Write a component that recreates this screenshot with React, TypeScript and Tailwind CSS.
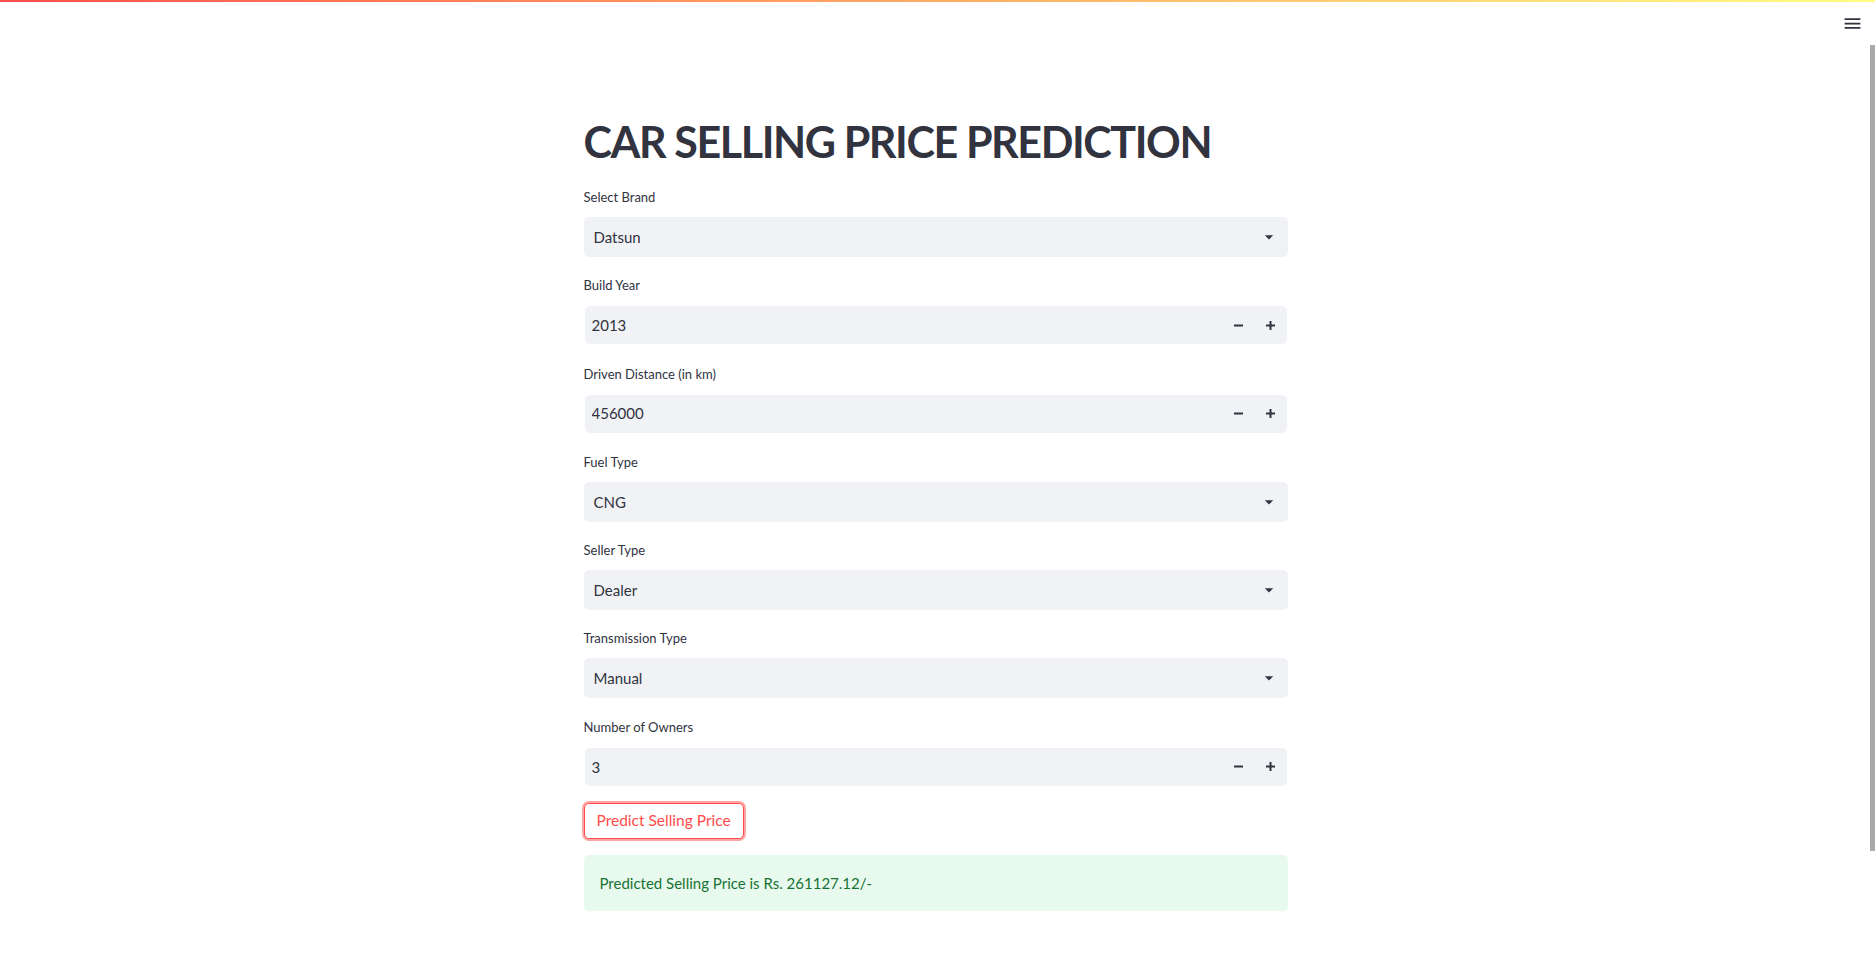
import { useState } from 'react'

type Field =
  | { kind: 'select'; label: string; value: string }
  | { kind: 'number'; label: string; value: string }

const fields: Field[] = [
  { kind: 'select', label: 'Select Brand', value: 'Datsun' },
  { kind: 'number', label: 'Build Year', value: '2013' },
  { kind: 'number', label: 'Driven Distance (in km)', value: '456000' },
  { kind: 'select', label: 'Fuel Type', value: 'CNG' },
  { kind: 'select', label: 'Seller Type', value: 'Dealer' },
  { kind: 'select', label: 'Transmission Type', value: 'Manual' },
  { kind: 'number', label: 'Number of Owners', value: '3' },
]

const MenuIcon = () => (
  <svg width="21" height="21" viewBox="0 0 24 24" fill="#31333f">
    <path d="M3 18h18v-2H3v2zm0-5h18v-2H3v2zm0-7v2h18V6H3z" />
  </svg>
)

const ArrowDown = () => (
  <svg width="20" height="20" viewBox="0 0 24 24" fill="#31333f">
    <path d="M7 10l5 5 5-5z" />
  </svg>
)

const Minus = () => (
  <svg width="9" height="9" viewBox="0 0 9 9" fill="#31333f">
    <rect x="0" y="3.5" width="9" height="2" />
  </svg>
)

const Plus = () => (
  <svg width="9" height="9" viewBox="0 0 9 9" fill="#31333f">
    <rect x="0" y="3.5" width="9" height="2" />
    <rect x="3.5" y="0" width="2" height="9" />
  </svg>
)

const SelectBox = ({ value }: { value: string }) => (
  <div className="h-[40px] rounded-[5px] bg-[#f0f2f6] flex items-center justify-between pl-[10px] pr-[9px] cursor-pointer">
    <span className="text-[15px] text-[#31333f]">{value}</span>
    <ArrowDown />
  </div>
)

const NumberBox = ({ value }: { value: string }) => {
  const [v, setV] = useState(value)
  return (
    <div className="h-[40px] p-[1px]">
      <div className="h-full rounded-[5px] bg-[#f0f2f6] flex items-center">
        <input
          value={v}
          onChange={(e) => setV(e.target.value)}
          className="flex-1 min-w-0 bg-transparent outline-none pl-[7px] text-[15px] text-[#31333f]"
        />
        <button className="w-[32px] h-full flex items-center justify-center">
          <Minus />
        </button>
        <button className="w-[32px] h-full flex items-center justify-center">
          <Plus />
        </button>
      </div>
    </div>
  )
}

export default function App() {
  return (
    <div className="min-h-screen bg-white font-['Lato',sans-serif] text-[#31333f] relative pr-[4px]">
      <div className="h-[2px] -mr-[4px] bg-gradient-to-r from-[#ff4b4b] to-[#fffd80]" />
      <header className="h-[44px] -mr-[4px] flex justify-end items-start pt-[11px] pr-[12px]">
        <button>
          <MenuIcon />
        </button>
      </header>

      <main className="w-[704px] mx-auto pt-[69px] pb-[60px]">
        <h1 className="text-[43px] leading-[53px] tracking-[-1.4px] font-bold text-[#31333f] mb-[19px]">
          CAR SELLING PRICE PREDICTION
        </h1>

        <div className="flex flex-col gap-[18.3px]">
          {fields.map((f) => (
            <div key={f.label}>
              <label className="block h-[21px] leading-[21px] text-[13px] mb-[9px]">{f.label}</label>
              {f.kind === 'select' ? <SelectBox value={f.value} /> : <NumberBox value={f.value} />}
            </div>
          ))}
        </div>

        <button className="mt-[16px] h-[36px] px-[12px] rounded-[5px] border border-[#ff4b4b] text-[#ff4b4b] text-[15.5px] bg-white shadow-[0_0_0_2px_rgba(255,75,75,0.5)]">
          Predict Selling Price
        </button>

        <div className="mt-[16px] h-[56px] rounded-[5px] bg-[#e8f9ee] flex items-center px-[16px] text-[15px] text-[#177233]">
          Predicted Selling Price is Rs. 261127.12/-
        </div>
      </main>

      <div className="fixed right-0 top-[45px] w-[5px] h-[806px] bg-[#a8a8ad]" />
    </div>
  )
}
